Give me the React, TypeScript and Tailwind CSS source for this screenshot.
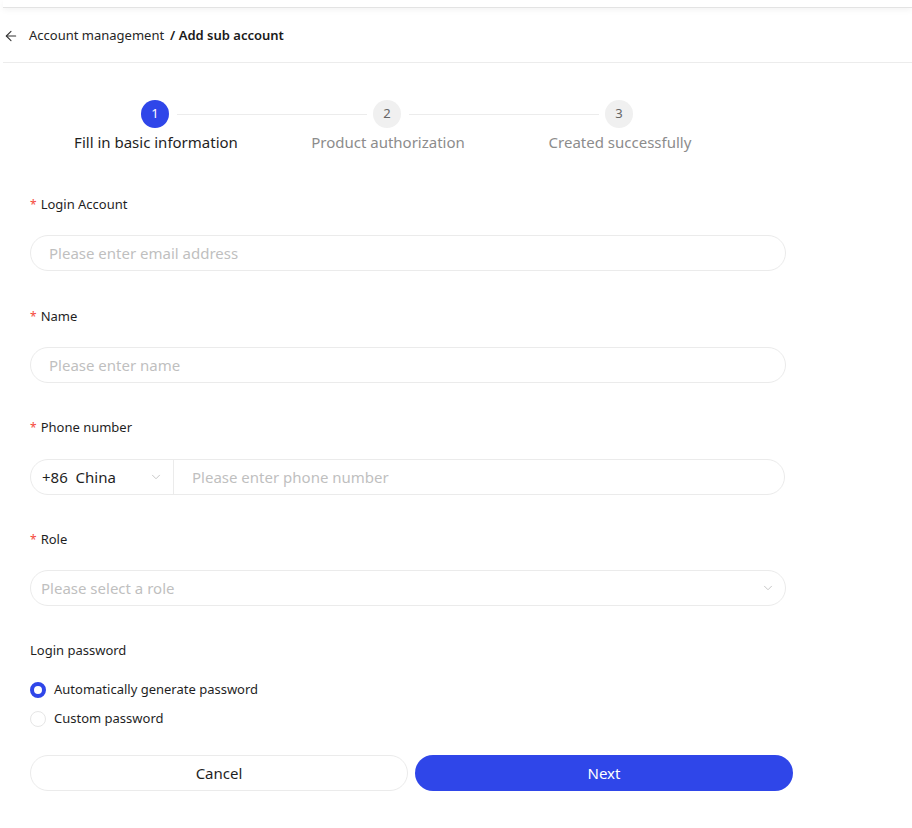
import { ArrowLeft, ChevronDown } from "lucide-react";

const steps = ["Fill in basic information", "Product authorization", "Created successfully"];

const Label = ({ text, required = true }: { text: string; required?: boolean }) => (
  <div className="h-5 flex items-center text-[13px] text-[#1f1f1f]">
    {required && <span className="text-[#f5483b] mr-1 text-[12px]">*</span>}
    {text}
  </div>
);

const App = () => {
  return (
    <div className="w-[912px] h-[828px] bg-white font-['Noto_Sans','Liberation_Sans',sans-serif] overflow-hidden">
      {/* top bar shadow */}
      <div className="h-[8px] ml-[3px] border-b border-[#e3e3e3] shadow-[0_2px_6px_rgba(0,0,0,0.05)]" />

      {/* Breadcrumb */}
      <div className="h-[55px] ml-[3px] flex items-center border-b border-[#ececec] pt-[2px]">
        <ArrowLeft className="w-4 h-4 text-[#333]" strokeWidth={1.6} />
        <span className="ml-[10px] text-[13px] text-[#262626]">Account management</span>
        <span className="ml-[6px] text-[13px] font-semibold text-[#1a1a1a]">/ Add sub account</span>
      </div>

      {/* Stepper */}
      <div className="ml-[40px] mt-[37px] grid grid-cols-[232px_232px_232px]">
        {steps.map((s, i) => (
          <div key={s} className="flex flex-col items-center">
            <div className="w-full flex items-center">
              <div className={`flex-1 h-px mr-[6px] ${i === 0 ? "" : "bg-[#ececec]"}`} />
              <div
                className={`w-[28px] h-[28px] rounded-full flex items-center justify-center text-[13px] ${
                  i === 0 ? "bg-[#2f46e9] text-white" : "bg-[#f0f0f0] text-[#666]"
                }`}
              >
                {i + 1}
              </div>
              <div className={`flex-1 h-px ml-[8px] ${i === 2 ? "" : "bg-[#ececec]"}`} />
            </div>
            <div className={`mt-[3px] text-[15px] leading-[22px] ${i === 0 ? "text-[#1f1f1f]" : "text-[#8c8c8c]"}`}>
              {s}
            </div>
          </div>
        ))}
      </div>

      {/* Form */}
      <div className="ml-[30px] w-[756px] mt-[42px] flex flex-col">
        <Label text="Login Account" />
        <div className="mt-5 h-9 rounded-full border border-[#ebebeb] flex items-center px-[18px] text-[15px] text-[#bfbfbf]">
          Please enter email address
        </div>

        <div className="mt-9">
          <Label text="Name" />
        </div>
        <div className="mt-5 h-9 rounded-full border border-[#ebebeb] flex items-center px-[18px] text-[15px] text-[#bfbfbf]">
          Please enter name
        </div>

        <div className="mt-[35px]">
          <Label text="Phone number" />
        </div>
        <div className="mt-[21px] h-9 w-[755px] rounded-full border border-[#ebebeb] flex items-center">
          <div className="w-[143px] h-full flex items-center pl-[11px] pr-[10px] border-r border-[#ebebeb]">
            <span className="text-[15px] text-[#1f1f1f]">+86&nbsp; China</span>
            <ChevronDown className="ml-auto w-[14px] h-[14px] text-[#bfbfbf]" strokeWidth={1.5} />
          </div>
          <span className="ml-[18px] text-[15px] text-[#bfbfbf]">Please enter phone number</span>
        </div>

        <div className="mt-[35px]">
          <Label text="Role" />
        </div>
        <div className="mt-5 h-9 rounded-full border border-[#ebebeb] flex items-center pl-[10px] pr-[10px] text-[15px] text-[#bfbfbf]">
          Please select a role
          <ChevronDown className="ml-auto w-[14px] h-[14px] text-[#bfbfbf]" strokeWidth={1.5} />
        </div>

        <div className="mt-[35px]">
          <Label text="Login password" required={false} />
        </div>
        <div className="mt-[21px] flex flex-col gap-[13px]">
          <div className="flex items-center h-4">
            <span className="w-4 h-4 rounded-full border-[4px] border-[#2f46e9] bg-white" />
            <span className="ml-2 text-[13px] text-[#1f1f1f]">Automatically generate password</span>
          </div>
          <div className="flex items-center h-4">
            <span className="w-4 h-4 rounded-full border border-[#e6e6e6] bg-white" />
            <span className="ml-2 text-[13px] text-[#1f1f1f]">Custom password</span>
          </div>
        </div>

        <div className="mt-[28px] flex gap-[7px] w-[763px]">
          <button className="w-[378px] h-9 rounded-full border border-[#ebebeb] bg-white text-[15px] text-[#1f1f1f]">
            Cancel
          </button>
          <button className="w-[378px] h-9 rounded-full bg-[#2f46e9] text-[15px] text-white">Next</button>
        </div>
      </div>
    </div>
  );
};

export default App;
